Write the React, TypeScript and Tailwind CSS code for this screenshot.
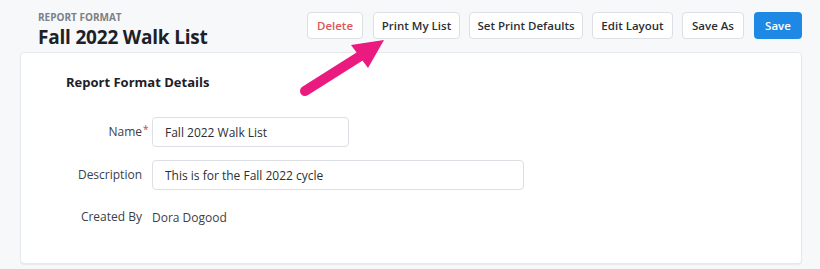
import React from 'react';

const font = { fontFamily: '"Open Sans", "Noto Sans", sans-serif' };

const Btn: React.FC<{ label: string; className?: string }> = ({ label, className = '' }) => (
  <button
    className={`h-[27px] flex items-center justify-center rounded border border-[#dcdfe3] bg-white text-[11.5px] font-semibold text-[#2a2f36] whitespace-nowrap ${className}`}
  >
    {label}
  </button>
);

const Field: React.FC<{ label: string; required?: boolean; children: React.ReactNode }> = ({ label, required, children }) => (
  <div className="flex items-center">
    <div className="relative w-[121px] text-right text-[12px] text-[#3b4048] whitespace-nowrap">
      {label}
      {required && <span className="absolute left-full top-[-1px] ml-[1px] text-[#d9363e] text-[10px]">*</span>}
    </div>
    <div className="pl-[10px]">{children}</div>
  </div>
);

export default function App() {
  return (
    <div style={font} className="relative w-[820px] h-[269px] bg-[#f7f8fa] overflow-hidden">
      <div className="flex items-start justify-between pl-[38px] pr-[18px] pt-[12px]">
        <div>
          <div className="text-[10px] font-bold text-[#7b8088] leading-[12px] mt-[-1px]">REPORT FORMAT</div>
          <h1 className="text-[19px] font-bold text-[#1d2126] leading-[26px] mt-[1px] tracking-[-0.2px]">Fall 2022 Walk List</h1>
        </div>
        <div className="flex items-center gap-[9px]">
          <Btn label="Delete" className="w-[56px] text-[#e0555a] mr-[1px]" />
          <Btn label="Print My List" className="w-[87px]" />
          <Btn label="Set Print Defaults" className="w-[114px]" />
          <Btn label="Edit Layout" className="w-[81px]" />
          <Btn label="Save As" className="w-[62px] mr-[1px]" />
          <button className="h-[27px] w-[48px] rounded bg-[#1e88e5] text-white text-[11.5px] font-semibold">Save</button>
        </div>
      </div>

      <div className="ml-[20px] mt-[2px] mr-[18px] h-[212px] bg-white rounded border border-[#e6e8eb] shadow-[0_1px_1px_rgba(0,0,0,0.06)]">
        <h2 className="pl-[45px] pt-[20px] text-[13px] font-bold text-[#1d2126] leading-[18px]">Report Format Details</h2>
        <div className="mt-[26px] flex flex-col gap-[13px]">
          <Field label="Name" required>
            <input
              readOnly
              value="Fall 2022 Walk List"
              className="w-[197px] h-[30px] rounded border border-[#dcdfe3] px-3 text-[12px] text-[#2a2f36] outline-none"
            />
          </Field>
          <Field label="Description">
            <input
              readOnly
              value="This is for the Fall 2022 cycle"
              className="w-[372px] h-[30px] rounded border border-[#dcdfe3] px-3 text-[12px] text-[#2a2f36] outline-none"
            />
          </Field>
          <Field label="Created By">
            <div className="h-[24px] leading-[24px] text-[12px] text-[#3b4048] mt-[3px]">Dora Dogood</div>
          </Field>
        </div>
      </div>

      <svg className="absolute left-0 top-0 pointer-events-none" width="820" height="269">
        <line x1="305" y1="91" x2="362" y2="55" stroke="#ea1a7f" strokeWidth="10" strokeLinecap="round" />
        <polygon points="384,40 351,45 368,68" fill="#ea1a7f" />
      </svg>
    </div>
  );
}
